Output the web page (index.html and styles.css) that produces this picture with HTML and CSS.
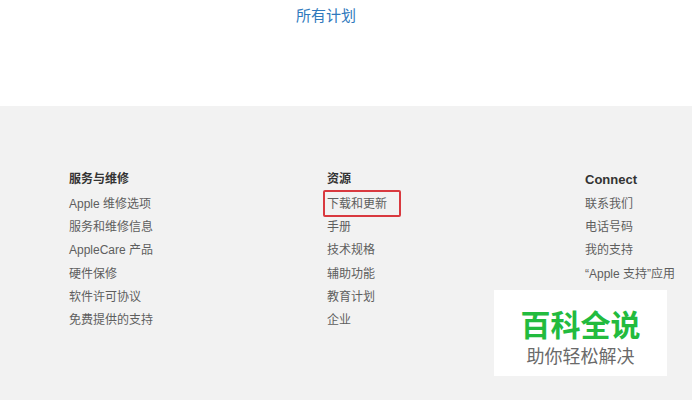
FILE: index.html
```html
<!DOCTYPE html>
<html lang="zh-CN">
<head>
    <meta charset="UTF-8">
    <meta name="viewport" content="width=device-width, initial-scale=1.0">
    <title>Apple 支持</title>
    <link rel="stylesheet" href="styles.css">
</head>
<body>
    <section class="plans">
        <a class="plans-link" href="#">所有计划</a>
    </section>
    <footer class="footer">
        <div class="columns">
            <div class="column">
                <h3>服务与维修</h3>
                <ul>
                    <li><a href="#">Apple 维修选项</a></li>
                    <li><a href="#">服务和维修信息</a></li>
                    <li><a href="#">AppleCare 产品</a></li>
                    <li><a href="#">硬件保修</a></li>
                    <li><a href="#">软件许可协议</a></li>
                    <li><a href="#">免费提供的支持</a></li>
                </ul>
            </div>
            <div class="column">
                <h3>资源</h3>
                <ul>
                    <li><a href="#" class="marked">下载和更新</a></li>
                    <li><a href="#">手册</a></li>
                    <li><a href="#">技术规格</a></li>
                    <li><a href="#">辅助功能</a></li>
                    <li><a href="#">教育计划</a></li>
                    <li><a href="#">企业</a></li>
                </ul>
            </div>
            <div class="column">
                <h3 class="latin">Connect</h3>
                <ul>
                    <li><a href="#">联系我们</a></li>
                    <li><a href="#">电话号码</a></li>
                    <li><a href="#">我的支持</a></li>
                    <li><a href="#">“Apple 支持”应用</a></li>
                </ul>
            </div>
        </div>
        <div class="watermark">
            <div class="wm-title">百科全说</div>
            <div class="wm-sub">助你轻松解决</div>
        </div>
    </footer>
</body>
</html>
```

FILE: styles.css
```css
body {
    font-family: "Liberation Sans", "Noto Sans CJK SC", sans-serif;
    margin: 0;
    padding: 0;
    background-color: #fff;
    height: 400px;
    overflow: hidden;
}
a {
    text-decoration: none;
}
.plans {
    height: 106px;
    padding-left: 296px;
    box-sizing: border-box;
}
.plans-link {
    display: inline-block;
    margin-top: 5px;
    font-size: 15px;
    line-height: 22px;
    color: #2f79bd;
}
.footer {
    position: relative;
    background-color: #f2f2f2;
    height: 294px;
    padding: 65px 0 0 69px;
    box-sizing: border-box;
}
.columns {
    display: grid;
    grid-template-columns: 258px 258px 1fr;
}
.column h3 {
    margin: 0 0 5px;
    font-size: 12px;
    line-height: 17px;
    font-weight: bold;
    color: #333;
}
.column h3.latin {
    font-size: 13px;
}
.column ul {
    list-style: none;
    margin: 0;
    padding: 0;
}
.column li {
    height: 23.2px;
    font-size: 12px;
    line-height: 23px;
}
.column li a {
    color: #5e5e5e;
}
.marked {
    position: relative;
}
.marked::after {
    content: "";
    position: absolute;
    left: -4px;
    top: -7px;
    width: 74px;
    height: 23px;
    border: 2px solid #d9393f;
    border-radius: 2px;
}
.watermark {
    position: absolute;
    left: 494px;
    top: 184px;
    width: 173px;
    height: 86px;
    background-color: #fff;
    text-align: center;
}
.wm-title {
    margin-top: 20px;
    font-size: 30px;
    line-height: 32px;
    font-weight: bold;
    color: #22bb3e;
}
.wm-sub {
    margin-top: 3px;
    font-size: 18px;
    line-height: 24px;
    color: #6a6a6a;
}
```
